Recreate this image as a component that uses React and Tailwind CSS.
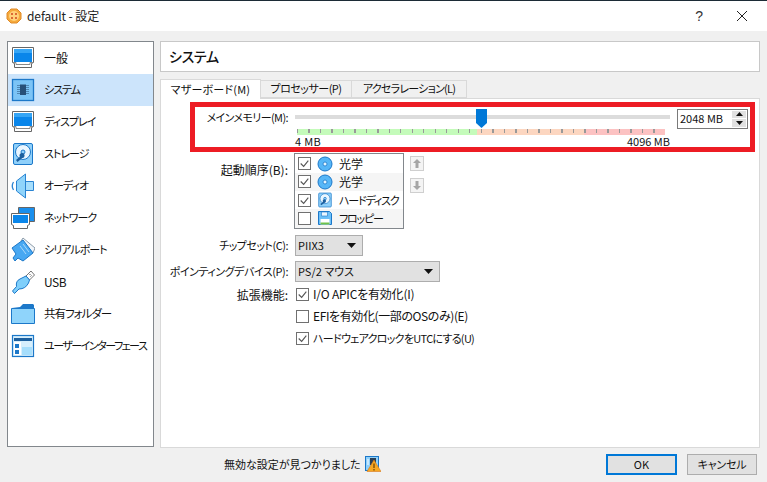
const jp = '"Noto Sans CJK JP", sans-serif';

function Monitor() {
  return (
    <svg width="24" height="24" viewBox="0 0 24 24">
      <path d="M1.500 1.500h21v15l-2 1v4h-17v-4l-2-1z" fill="#fff" stroke="#666" />
      <path d="M3 3h18v13H3z" fill="#0a86ea" />
      <path d="M3 3h18v4H3z" fill="#35a5f5" />
      <path d="M2 16.500h3v2h14v-2h3" fill="none" stroke="#888" />
    </svg>
  );
}

function ChipIcon() {
  return (
    <svg width="24" height="24" viewBox="0 0 24 24">
      <rect x="1.500" y="1.500" width="21" height="21" fill="#7cc4f6" stroke="#1c78c9" strokeWidth="1.300" />
      <path d="M6 7.500h3M6 9.500h3M6 11.500h3M6 13.500h3M6 15.500h3M15 7.500h3M15 9.500h3M15 11.500h3M15 13.500h3M15 15.500h3" stroke="#4f86b3" />
      <rect x="9" y="6.500" width="6" height="10.500" fill="#274f78" />
    </svg>
  );
}

function DiskIcon({ size = 24 }) {
  return (
    <svg width={size} height={size} viewBox="0 0 24 24">
      <rect x="2.500" y="1.500" width="19" height="21" rx="1.500" fill="#8fd0fa" stroke="#1c78c9" />
      <circle cx="12" cy="10" r="7.500" fill="#eaf6ff" stroke="#1c78c9" />
      <circle cx="12" cy="10" r="2" fill="#8fd0fa" stroke="#1c78c9" />
      <path d="M11 13l-6 5 1.500 2 6-5z" fill="#1c5f9e" />
      <circle cx="11" cy="13.500" r="2.500" fill="#1c5f9e" />
    </svg>
  );
}

function SpeakerIcon() {
  return (
    <svg width="24" height="26" viewBox="0 0 24 26">
      <path d="M2.500 9q-2.500 4 0 8" fill="none" stroke="#2a84d2" strokeWidth="1.300" />
      <path d="M14.500 8.500h8v9h-8z" fill="#a6defc" stroke="#2a84d2" />
      <path d="M5.500 8L14.500 1v24l-9-7z" fill="#8fd4fb" stroke="#2a84d2" />
    </svg>
  );
}

function NetIcon() {
  return (
    <svg width="24" height="22" viewBox="0 0 24 22">
      <path d="M7.500 .5h16v14h-16z" fill="#1a8fed" stroke="#666" />
      <path d="M.5 6.500h18v11l-2 1v3h-14v-3l-2-1z" fill="#fff" stroke="#666" />
      <path d="M2 8h15v8H2z" fill="#0a86ea" />
    </svg>
  );
}

function SerialIcon() {
  return (
    <svg width="24" height="26" viewBox="0 0 24 26">
      <path d="M12 1l12 10-2 5L10 4z" fill="#f2f6fa" stroke="#8a9aa8" />
      <path d="M1 11L12 3l10 13-5 4-5 4-5-3-3 3-2-3 3-4z" fill="#48a8f2" stroke="#1c78c9" />
      <path d="M12 7l6 8M9 9l6 8" stroke="#a9d9fa" />
    </svg>
  );
}

function UsbIcon() {
  return (
    <svg width="24" height="24" viewBox="0 0 24 24">
      <path d="M15 6l5-5 3.500 4-5 5z" fill="#fff" stroke="#777" />
      <path d="M18.500 4l1 1M20.500 5.500l-1 1" stroke="#555" />
      <path d="M15 6l3.500 4-1 3q-3 6-9.500 6l-4.500 4.500L1.500 21l4-4.500Q4.500 11 9 9z" fill="#7fcffb" stroke="#1c78c9" />
    </svg>
  );
}

function FolderIcon() {
  return (
    <svg width="24" height="22" viewBox="0 0 24 22">
      <path d="M1 5l8-1 3-3h10l1 1v4H1z" fill="#1c78c9" />
      <path d="M.5 5.500h23v15H.5z" fill="#8fd4fb" stroke="#1c78c9" />
    </svg>
  );
}

function UiIcon() {
  return (
    <svg width="24" height="24" viewBox="0 0 24 24">
      <rect x="1.500" y="1.500" width="21" height="21" fill="#d6effd" stroke="#1c78c9" strokeWidth="1.200" />
      <path d="M3 4h18v3H3z" fill="#1c5f9e" />
      <path d="M3 8h7v13H3z" fill="#fff" />
      <path d="M4 10h4v4H4zM4 16h4v4H4z" fill="#1c78c9" />
      <path d="M11 13h10v8H11z" fill="#a6defc" />
    </svg>
  );
}

function AppIcon() {
  return (
    <svg width="16" height="16" viewBox="0 0 16 16">
      <path d="M5 1h6l2 2 2 2v6l-2 2-2 2H5l-2-2-2-2V5l2-2z" fill="#f5a93c" stroke="#e08a28" />
      <circle cx="8" cy="8" r="5" fill="#ffd27a" />
      <circle cx="6" cy="6" r="1" fill="#d0481f" />
      <circle cx="10" cy="6" r="1" fill="#d0481f" />
      <circle cx="6" cy="10" r="1" fill="#d0481f" />
      <circle cx="10" cy="10" r="1" fill="#d0481f" />
    </svg>
  );
}

function OpticalIcon() {
  return (
    <svg width="16" height="16" viewBox="0 0 16 16">
      <circle cx="8" cy="8" r="7" fill="#56b6f7" stroke="#1c78c9" />
      <circle cx="8" cy="8" r="2" fill="#e6f6ff" stroke="#1c78c9" strokeWidth="0.800" />
    </svg>
  );
}

function FloppyIcon() {
  return (
    <svg width="16" height="16" viewBox="0 0 16 16">
      <path d="M1.500 1.500h11l2 2v11h-13z" fill="#6cc0f8" stroke="#1c78c9" />
      <path d="M4.500 2h6v4h-6z" fill="#eaf6ff" stroke="#1c78c9" strokeWidth="0.600" />
      <path d="M3.500 9h9v5.500h-9z" fill="#fff" />
      <path d="M3.500 12.500h9v2h-9z" fill="#6fc24a" />
    </svg>
  );
}

function WarnIcon() {
  return (
    <svg width="16" height="16" viewBox="0 0 16 16">
      <rect x="0.500" y="0.500" width="13" height="14" fill="#8fd0fa" stroke="#1c78c9" />
      <path d="M2 4h2M2 6h2M2 8h2" stroke="#fff" />
      <rect x="5" y="2" width="6" height="7" fill="#2a3f55" />
      <path d="M9 4L16 15.500H2z" fill="#f7a823" stroke="#d9791a" strokeWidth="0.600" />
      <path d="M9 7.500v4.500M9 13v1.500" stroke="#4a2b00" />
    </svg>
  );
}

function Check() {
  return (
    <svg className="text-[#555]" width="11" height="11" viewBox="0 0 13 13">
      <path d="M2 6.500l3.500 3.500L11 3" fill="none" stroke="currentColor" strokeWidth="1.300" />
    </svg>
  );
}

function Box({ checked }) {
  return (
    <span className="flex h-[13px] w-[13px] shrink-0 items-center justify-center border border-[#707070] bg-white">
      {checked && <Check />}
    </span>
  );
}

function Caret() {
  return (
    <svg width="9" height="5" viewBox="0 0 9 5">
      <path d="M0 0h9L4.500 5z" fill="#111" />
    </svg>
  );
}

const navItems = [
  ['一般', <Monitor />, 'text-[12px]'],
  ['システム', <ChipIcon />, 'text-[11px] tracking-[-1px]'],
  ['ディスプレイ', <Monitor />, 'text-[11px] tracking-[-1px]'],
  ['ストレージ', <DiskIcon />, 'text-[11px] tracking-[-1px]'],
  ['オーディオ', <SpeakerIcon />, 'text-[11px] tracking-[-1px]'],
  ['ネットワーク', <NetIcon />, 'text-[11px] tracking-[-1px]'],
  ['シリアルポート', <SerialIcon />, 'text-[11px] tracking-[-1px]'],
  ['USB', <UsbIcon />, 'text-[12px] tracking-[-0.400px]'],
  ['共有フォルダー', <FolderIcon />, 'text-[11.500px] tracking-[-1px]'],
  ['ユーザーインターフェース', <UiIcon />, 'text-[11px] tracking-[-1.500px]'],
];

const bootItems = [
  ['光学', true, <OpticalIcon />, false, 'text-[12px]'],
  ['光学', true, <OpticalIcon />, true, 'text-[12px]'],
  ['ハードディスク', true, <DiskIcon size={16} />, false, 'text-[11px] tracking-[-1.200px]'],
  ['フロッピー', false, <FloppyIcon />, true, 'text-[11px] tracking-[-1.200px]'],
];

const extras = [
  ['I/O APICを有効化(I)', true, 'text-[12px] tracking-[-0.200px]'],
  ['EFIを有効化(一部のOSのみ)(E)', false, 'text-[12px] tracking-[-0.400px]'],
  ['ハードウェアクロックをUTCにする(U)', true, 'text-[11px] tracking-[-0.700px]'],
];

export default function App() {
  return (
    <div
      className="relative flex h-[482px] w-[767px] flex-col overflow-hidden bg-[#f0f0f0] text-[12px] leading-none text-[#111] [font-feature-settings:'palt']"
      style={{ fontFamily: jp }}
    >
      <div className="h-px bg-[#1c2b36]" />
      <header className="flex h-[30px] items-center bg-white pl-[6px]">
        <AppIcon />
        <span className="ml-[5px] tracking-[-0.100px] text-[#222]">default - 設定</span>
        <span className="ml-auto mr-[33px] text-[14px] text-[#333]" style={{ fontFamily: '"Liberation Sans", sans-serif' }}>?</span>
        <svg className="mr-[19px]" width="12" height="12" viewBox="0 0 12 12">
          <path d="M1 1l10 10M11 1L1 11" stroke="#222" />
        </svg>
      </header>

      <main className="flex flex-1 gap-[6px] pl-[7px] pt-[10px]">
        <nav className="h-[406px] w-[147px] border border-[#82878c] bg-white">
          {navItems.map(([label, icon, cls], i) => (
            <div key={i} className={`flex h-[32px] items-center ${i === 1 ? 'bg-[#cce4fb]' : ''}`}>
              <span className="flex w-[36px] shrink-0 justify-center pr-[7px]">{icon}</span>
              <span className={`whitespace-nowrap ${cls}`}>{label}</span>
            </div>
          ))}
        </nav>

        <section className="flex w-[600px] flex-col">
          <h1 className="flex h-[31px] items-center border border-[#c8c8c8] bg-white pl-[8px] text-[14px] font-medium tracking-[-0.300px]">システム</h1>

          <div className="mt-[6px] flex h-[20px] items-end text-[11px]">
            <div className="z-10 mb-[-1px] flex h-[20px] w-[101px] items-center justify-center border border-b-0 border-[#d9d9d9] bg-white tracking-[0.200px]">マザーボード(M)</div>
            <div className="flex h-[18px] w-[91px] items-center justify-center border border-l-0 border-[#d9d9d9] bg-[#f0f0f0] tracking-[-0.500px]">プロセッサー(P)</div>
            <div className="flex h-[18px] w-[115px] items-center justify-center border border-l-0 border-[#d9d9d9] bg-[#f0f0f0] tracking-[-0.750px]">アクセラレーション(L)</div>
          </div>

          <div className="h-[350px] border border-[#d9d9d9] bg-white pt-[10px]">
            <div className="flex">
              <div className="w-[127px] pt-[3px] text-right text-[11px] tracking-[-0.600px]">メインメモリー(M):</div>
              <div className="ml-[7px] w-[375px]">
                <div className="relative h-[20px]">
                  <div className="absolute left-0 right-0 top-[6px] h-[4px] bg-[#dcdcdc]" />
                  <svg className="absolute left-[181px] top-0" width="11" height="19" viewBox="0 0 11 19">
                    <path d="M0 0h11v14l-5.500 5L0 14z" fill="#0078d7" />
                  </svg>
                </div>
                <div className="relative ml-[2px] flex h-[6px] w-[368px]">
                  <div className="w-[180px] bg-[#c4fbba]" />
                  <div className="w-[107px] bg-[#fcd6c0]" />
                  <div className="w-[81px] bg-[#fcc2c2]" />
                  <div className="absolute inset-x-0 top-0 h-[4px] bg-[repeating-linear-gradient(90deg,#999_0,#999_1px,transparent_1px,transparent_11.5px)]" />
                </div>
                <div className="mt-[1px] flex justify-between text-[11px] leading-[11px]">
                  <span className="tracking-[0.300px]">4 MB</span>
                  <span>4096 MB</span>
                </div>
              </div>
              <div className="ml-[7px] flex h-[20px] w-[71px] items-center justify-between border border-[#7a7a7a] bg-white pl-[2px] pr-px">
                <span className="text-[11px]">2048 MB</span>
                <span className="flex h-[16px] w-[14px] flex-col gap-px">
                  <span className="flex flex-1 items-center justify-center bg-[#e1e1e1]">
                    <svg width="7" height="4" viewBox="0 0 7 4"><path d="M0 4l3.500-4L7 4z" fill="#111" /></svg>
                  </span>
                  <span className="flex flex-1 items-center justify-center bg-[#e1e1e1]">
                    <svg width="7" height="4" viewBox="0 0 7 4"><path d="M0 0l3.500 4L7 0z" fill="#111" /></svg>
                  </span>
                </span>
              </div>
            </div>

            <div className="mt-[6px] flex">
              <div className="w-[127px] pt-[11px] text-right">起動順序(B):</div>
              <div className="ml-[6px] h-[76px] w-[110px] border border-[#82878c] bg-white pt-px">
                {bootItems.map(([label, checked, icon, alt, cls], i) => (
                  <div key={i} className={`flex h-[18.250px] items-center pl-[3px] ${alt ? 'bg-[#f5f5f5]' : ''}`}>
                    <Box checked={checked} />
                    <span className="ml-[6px] flex w-[16px] justify-center">{icon}</span>
                    <span className={`ml-[6px] whitespace-nowrap ${cls}`}>{label}</span>
                  </div>
                ))}
              </div>
              <div className="ml-[6px] flex flex-col gap-[7px] pt-[3px]">
                <span className="flex h-[15px] w-[14px] items-center justify-center border border-[#cfcfcf] bg-[#f4f4f4]">
                  <svg width="8" height="9" viewBox="0 0 8 9"><path d="M4 0l4 4H5.500v5h-3V4H0z" fill="#a5a5a5" /></svg>
                </span>
                <span className="flex h-[15px] w-[14px] items-center justify-center border border-[#cfcfcf] bg-[#f4f4f4]">
                  <svg width="8" height="9" viewBox="0 0 8 9"><path d="M4 9L0 5h2.500V0h3v5H8z" fill="#a5a5a5" /></svg>
                </span>
              </div>
            </div>

            <div className="mt-[6px] flex items-center">
              <div className="w-[127px] text-right text-[11px] tracking-[-0.500px]">チップセット(C):</div>
              <div className="ml-[7px] flex h-[21px] w-[68px] items-center justify-between border border-[#adadad] bg-[#e1e1e1] pl-[2px] pr-[6px]">
                <span className="text-[11px]">PIIX3</span>
                <Caret />
              </div>
            </div>

            <div className="mt-[5px] flex items-center">
              <div className="w-[127px] whitespace-nowrap text-right text-[11px] tracking-[-0.450px]">ポインティングデバイス(P):</div>
              <div className="ml-[7px] flex h-[21px] w-[145px] items-center justify-between border border-[#adadad] bg-[#e1e1e1] pl-[2px] pr-[6px]">
                <span className="text-[11px]">PS/2 マウス</span>
                <Caret />
              </div>
            </div>

            <div className="mt-[6px] flex">
              <div className="w-[127px] pt-[1px] text-right">拡張機能:</div>
              <div className="ml-[8px] flex flex-col gap-[9px]">
                {extras.map(([label, checked, cls], i) => (
                  <div key={i} className="flex h-[13px] items-center gap-[4px]">
                    <Box checked={checked} />
                    <span className={`whitespace-nowrap ${cls}`}>{label}</span>
                  </div>
                ))}
              </div>
            </div>
          </div>
        </section>
      </main>

      <footer className="flex h-[35px] items-center pb-[1px] pl-[224px] pr-[10px]">
        <span className="text-[11px]">無効な設定が見つかりました</span>
        <span className="ml-[4px]"><WarnIcon /></span>
        <button className="ml-auto h-[21px] w-[71px] border-2 border-[#0078d7] bg-[#e1e1e1] text-[11px]">OK</button>
        <button className="ml-[10px] h-[21px] w-[70px] border border-[#adadad] bg-[#e1e1e1] text-[11px] tracking-[-0.200px]">キャンセル</button>
      </footer>

      <div className="pointer-events-none absolute left-[190px] top-[102px] h-[50px] w-[565px] border-[5px] border-[#ed1c24]" />
    </div>
  );
}
